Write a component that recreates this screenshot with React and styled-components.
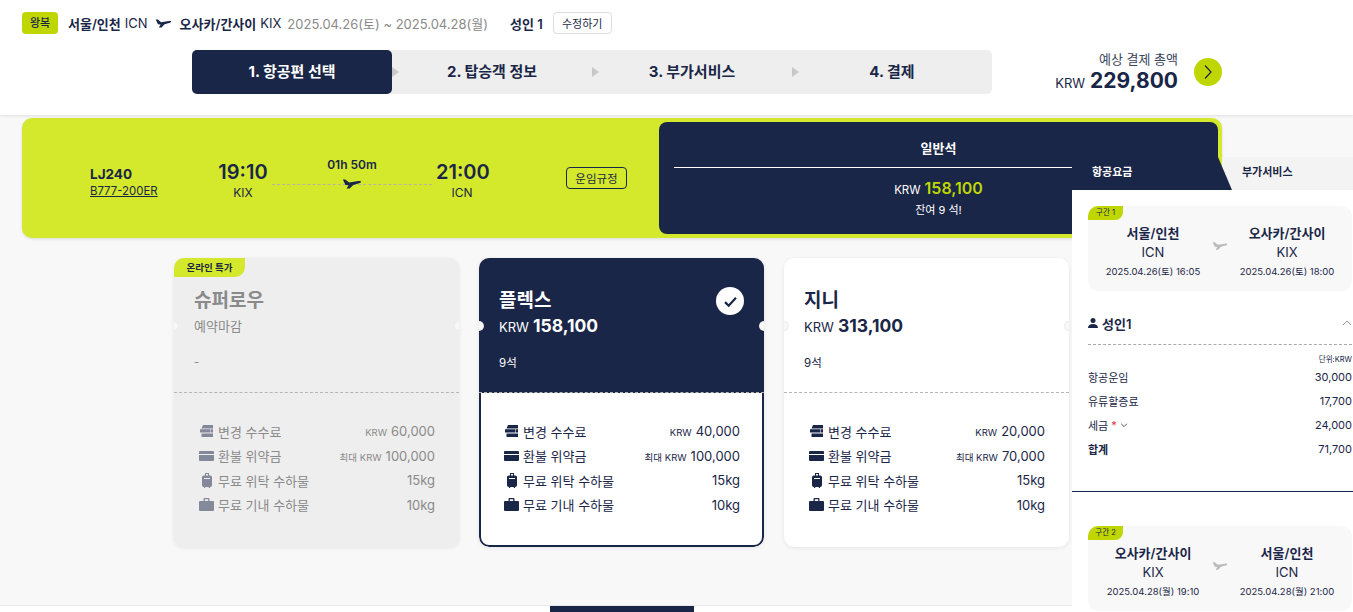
import * as React from 'react';
import styled, { createGlobalStyle } from 'styled-components';

const navy = '#1a2647';
const lime = '#d4e92b';
const darkLime = '#bfd600';

const GlobalStyle = createGlobalStyle`
    html, body { margin: 0; padding: 0; height: 100%; overflow: hidden; }
    body {
        font-family: Inter, "Noto Sans CJK KR", "Noto Sans", sans-serif;
        color: ${navy};
        background: #f8f8f8;
    }
    #root { height: 100%; }
    * { box-sizing: border-box; }
`;

const Page = styled.div`
    position: relative;
    height: 612px;
    display: flex;
    flex-direction: column;
    overflow: hidden;
`;

const Header = styled.header`
    height: 115px;
    flex: none;
    padding: 12px 131px 0 22px;
    background: #fff;
    box-shadow: 0 1px 3px rgba(0, 0, 0, 0.1);
`;

const Summary = styled.div`
    display: flex;
    align-items: center;
    height: 22px;
    font-size: 13px;
    white-space: nowrap;
`;

const TripBadge = styled.span`
    width: 36px;
    height: 22px;
    margin-right: 10px;
    border-radius: 4px;
    background: ${darkLime};
    font-size: 11px;
    font-weight: 500;
    line-height: 22px;
    text-align: center;
`;

const City = styled.b`
    font-weight: 600;
    margin-right: 4px;
`;

const Dates = styled.span`
    margin-left: 6px;
    color: #8a8a8a;
`;

const Pax = styled.b`
    margin-left: 22px;
    font-weight: 600;
`;

const EditButton = styled.button`
    width: 59px;
    height: 22px;
    margin-left: 10px;
    padding: 0;
    border: 1px solid #ddd;
    border-radius: 4px;
    background: #fff;
    color: ${navy};
    font: inherit;
    font-size: 11px;
`;

const RouteArrow = styled.span`
    display: inline-flex;
    margin: 0 8px 0 7px;
`;

const HeaderBottom = styled.div`
    display: flex;
    align-items: center;
    height: 44px;
    margin: 16px 0 0 170px;
`;

const Steps = styled.ol`
    display: flex;
    width: 800px;
    height: 44px;
    margin: 0;
    padding: 0;
    list-style: none;
    border-radius: 5px;
    background: #eee;
`;

const Step = styled.li`
    position: relative;
    flex: 1;
    border-radius: 5px;
    background: ${p => (p.$active ? navy : 'transparent')};
    color: ${p => (p.$active ? '#fff' : navy)};
    font-size: 15px;
    font-weight: 700;
    line-height: 44px;
    text-align: center;

    &:not(:last-child)::after {
        content: '';
        position: absolute;
        left: 100%;
        top: 17px;
        border-style: solid;
        border-width: 5px 0 5px 7px;
        border-color: transparent transparent transparent #c8c8c8;
    }
`;

const Total = styled.div`
    display: flex;
    align-items: center;
    margin-left: auto;
`;

const TotalText = styled.div`
    text-align: right;
`;

const TotalLabel = styled.div`
    font-size: 13px;
    line-height: 18px;
    color: #3a4560;
`;

const TotalAmount = styled.div`
    display: flex;
    align-items: baseline;
    justify-content: flex-end;
    gap: 5px;
    height: 26px;
    font-size: 13px;
    line-height: 26px;
`;

const TotalNumber = styled.b`
    font-size: 21px;
    font-weight: 700;
    line-height: 26px;
`;

const NextButton = styled.button`
    display: flex;
    align-items: center;
    justify-content: center;
    width: 28px;
    height: 28px;
    margin-left: 16px;
    padding: 0;
    border: 0;
    border-radius: 50%;
    background: ${darkLime};
    color: ${navy};
`;

const Main = styled.main`
    flex: 1;
    padding: 3px 0 0 22px;
`;

const FlightCard = styled.section`
    display: flex;
    width: 1200px;
    height: 120px;
    padding: 4px;
    border-radius: 10px;
    background: ${lime};
    box-shadow: 0 1px 3px rgba(0, 0, 0, 0.12);
`;

const FlightInfo = styled.div`
    display: flex;
    align-items: center;
    width: 633px;
    padding-left: 64px;
`;

const FlightNumber = styled.div`
    width: 127px;
    margin-top: 6px;
`;

const FlightCode = styled.div`
    font-size: 13.5px;
    font-weight: 700;
    line-height: 20px;
`;

const Aircraft = styled.div`
    font-size: 11.4px;
    line-height: 15px;
    text-decoration: underline;
`;

const TimeBlock = styled.div`
    width: 52px;
    margin-top: 4px;
    text-align: center;
`;

const Time = styled.div`
    font-size: 20px;
    font-weight: 600;
    line-height: 26px;
`;

const Airport = styled.div`
    font-size: 12px;
    line-height: 16px;
`;

const Duration = styled.div`
    position: relative;
    width: 160px;
    margin: 0 4px 2px 3px;
    padding-bottom: 24px;
    font-size: 12px;
    font-weight: 600;
    line-height: 16px;
    text-align: center;
`;

const DurationLine = styled.div`
    position: absolute;
    left: 0;
    right: 0;
    bottom: 12px;
    border-top: 1px dashed #b6b6a0;
`;

const DurationPlane = styled.span`
    position: absolute;
    left: 70px;
    bottom: 3px;
    display: flex;
`;

const RuleButton = styled.button`
    width: 61px;
    height: 22px;
    margin-left: 78px;
    padding: 0;
    border: 1px solid ${navy};
    border-radius: 4px;
    background: transparent;
    color: ${navy};
    font: inherit;
    font-size: 11.5px;
`;

const FarePanel = styled.div`
    flex: 1;
    padding: 0 15px;
    border-radius: 8px;
    background: ${navy};
    color: #fff;
    text-align: center;
`;

const FareClass = styled.div`
    height: 46px;
    border-bottom: 1px solid #fff;
    font-size: 13px;
    font-weight: 600;
    line-height: 53px;
`;

const FarePrice = styled.div`
    margin-top: 10px;
    font-size: 11.5px;
    line-height: 21px;
`;

const FareNumber = styled.b`
    margin-left: 4px;
    color: ${darkLime};
    font-size: 16px;
    font-weight: 600;
`;

const FareSeats = styled.div`
    font-size: 11px;
    line-height: 18px;
`;

const Cards = styled.div`
    display: flex;
    gap: 20px;
    margin: 20px 0 0 152px;
`;

const Card = styled.article`
    position: relative;
    width: 285px;
    height: 289px;
    border-radius: 10px;
    overflow: hidden;
    background: ${p => (p.$tone === 'closed' ? '#eee' : '#fff')};
    color: ${p => (p.$tone === 'closed' ? '#8a8a8a' : navy)};
    box-shadow: 0 1px 4px rgba(0, 0, 0, 0.08);
`;

const CardTop = styled.div`
    position: relative;
    height: 135px;
    padding: 30px 20px 0;
    background: ${p => (p.$tone === 'selected' ? navy : 'transparent')};
    color: ${p => (p.$tone === 'selected' ? '#fff' : 'inherit')};
    border-bottom: 1px dashed #b5b5b5;

    &::before,
    &::after {
        content: '';
        position: absolute;
        top: 63px;
        width: 10px;
        height: 10px;
        border-radius: 50%;
        background: #f8f8f8;
        box-shadow: inset 0 0 2px rgba(0, 0, 0, 0.12);
    }
    &::before { left: -5px; }
    &::after { right: -5px; }
`;

const CardBottom = styled.div`
    height: 154px;
    padding: ${p => (p.$tone === 'selected' ? '26px 22px 0 18px' : '26px 24px 0 20px')};
    border: ${p => (p.$tone === 'selected' ? `2px solid ${navy}` : '0')};
    border-top: 0;
    border-radius: 0 0 10px 10px;
`;

const OnlineTag = styled.span`
    position: absolute;
    left: 0;
    top: 0;
    width: 71px;
    height: 19px;
    border-radius: 0 0 10px 0;
    background: ${lime};
    color: ${navy};
    font-size: 9.5px;
    font-weight: 600;
    line-height: 19px;
    text-align: center;
`;

const CardTitle = styled.h3`
    margin: 0;
    font-size: 19px;
    font-weight: 700;
    line-height: 25px;
`;

const CardPrice = styled.div`
    font-size: 13px;
    line-height: 26px;
`;

const CardPriceNumber = styled.b`
    margin-left: 4px;
    font-size: 17.5px;
    font-weight: 700;
`;

const ClosedLabel = styled.div`
    font-size: 13px;
    line-height: 26px;
`;

const CardNote = styled.div`
    margin-top: 10px;
    font-size: 11.5px;
    line-height: 26px;
`;

const SelectedMark = styled.span`
    position: absolute;
    right: 20px;
    top: 29px;
    display: flex;
    align-items: center;
    justify-content: center;
    width: 28px;
    height: 28px;
    border-radius: 50%;
    background: #fff;
    color: ${navy};
`;

const BenefitRow = styled.div`
    display: flex;
    align-items: center;
    height: 24.5px;
    font-size: 13px;
`;

const BenefitIcon = styled.span`
    display: flex;
    justify-content: center;
    flex: none;
    width: 15px;
    margin: 0 4px 0 5px;
    color: ${navy};
    opacity: ${p => (p.$closed ? 0.5 : 1)};
`;

const BenefitValue = styled.span`
    margin-left: auto;
    font-size: 13px;
`;

const Currency = styled.small`
    margin-right: 4px;
    font-size: 9.5px;
`;

const SidePanel = styled.aside`
    position: absolute;
    left: 1072px;
    top: 157px;
    width: 281px;
    bottom: 0;
`;

const Tabs = styled.div`
    display: flex;
    height: 33px;
    font-size: 11px;
    font-weight: 600;
    line-height: 31px;
`;

const ActiveTab = styled.div`
    width: 160px;
    padding-left: 20px;
    background: ${navy};
    color: #fff;
    clip-path: polygon(0 0, 146px 0, 100% 100%, 0 100%);
`;

const IdleTab = styled.div`
    flex: 1;
    margin-left: -10px;
    padding-left: 20px;
    background: #f3f3f3;
`;

const PanelBody = styled.div`
    height: 440px;
    padding: 16px 1px 0 16px;
    background: #fff;
`;

const Segment = styled.div`
    position: relative;
    display: flex;
    align-items: flex-start;
    height: 85px;
    padding: 18px 6px 0;
    border-radius: 10px;
    background: #f8f8f8;
    overflow: hidden;
`;

const SegmentTag = styled.span`
    position: absolute;
    left: 0;
    top: 0;
    width: 35px;
    height: 14px;
    border-radius: 0 0 8px 0;
    background: ${darkLime};
    font-size: 7.5px;
    line-height: 14px;
    text-align: center;
`;

const SegmentPoint = styled.div`
    flex: 1;
    text-align: center;
    white-space: nowrap;
`;

const SegmentCity = styled.div`
    font-size: 13px;
    font-weight: 600;
    line-height: 19px;
`;

const SegmentCode = styled.div`
    font-size: 13px;
    line-height: 18px;
`;

const SegmentDate = styled.div`
    margin-top: 4px;
    font-size: 9.5px;
    line-height: 14px;
`;

const SegmentPlane = styled.span`
    display: flex;
    width: 16px;
    margin-top: 14px;
`;

const PaxHead = styled.div`
    display: flex;
    align-items: center;
    gap: 4px;
    height: 43px;
    margin-top: 11px;
    border-bottom: 1px dashed #aaa;
    font-size: 13px;
    font-weight: 600;
`;

const Collapse = styled.span`
    display: flex;
    margin-left: auto;
    color: #999;
`;

const Unit = styled.div`
    margin: 10px 0 0;
    font-size: 7.5px;
    line-height: 10px;
    text-align: right;
`;

const FareRow = styled.div`
    display: flex;
    justify-content: space-between;
    align-items: center;
    height: 24px;
    font-size: 11px;
    font-weight: ${p => (p.$total ? 700 : 400)};
`;

const FareLabel = styled.span`
    display: inline-flex;
    align-items: center;
    gap: 3px;
`;

const Amount = styled.span`
    font-weight: 400;
`;

const Star = styled.span`
    color: #e0344a;
`;

const PanelRule = styled.hr`
    height: 1px;
    margin: 30px -1px 34px -16px;
    border: 0;
    background: ${navy};
`;

const FooterBar = styled.footer`
    flex: none;
    height: 7px;
    padding-left: 550px;
    background: #fff;
    border-top: 1px solid #e8e8e8;
`;

const FooterTab = styled.div`
    width: 144px;
    height: 100%;
    background: ${navy};
`;

const Plane = ({ size = 16, color = navy }) => (
    <svg width={size} height={size} viewBox="0 0 24 24" fill={color} aria-hidden="true">
        <path d="M1 6.500h3l4.500 3.800 11-1.800c2.600-.4 4 .6 3.200 1.500-.6.7-2.400 1.300-4.200 1.800l-5 1.400-4.300 4.300H5.400l2.600-4-3.800-.3z" />
    </svg>
);

const ChangeIcon = () => (
    <svg width="13" height="12" viewBox="0 0 13 12" fill="currentColor" aria-hidden="true">
        <path d="M3 0h10v3.400H1.500zM0 4.200h10.500v3.400H0zM11 4.200h2v3.400h-2zM1.500 8.400H13V12H1.500z" />
    </svg>
);

const CardIcon = () => (
    <svg width="15" height="10" viewBox="0 0 15 10" fill="currentColor" aria-hidden="true">
        <path d="M0 1a1 1 0 0 1 1-1h13a1 1 0 0 1 1 1v2H0zM0 4h15v5a1 1 0 0 1-1 1H1a1 1 0 0 1-1-1z" />
    </svg>
);

const SuitcaseIcon = () => (
    <svg width="10" height="15" viewBox="0 0 10 15" fill="currentColor" aria-hidden="true">
        <path d="M3 0h4v2.400h1.200A1.800 1.800 0 0 1 10 4.200v8A1.800 1.800 0 0 1 8.200 14H8v1H6.800v-1H3.200v1H2v-1h-.2A1.800 1.800 0 0 1 0 12.200v-8a1.800 1.800 0 0 1 1.800-1.800H3zm1 1v1.400h2V1zM2 5v1h6V5z" fillRule="evenodd" />
    </svg>
);

const BagIcon = () => (
    <svg width="15" height="13" viewBox="0 0 15 13" fill="currentColor" aria-hidden="true">
        <path d="M4.500 3V1a1 1 0 0 1 1-1h4a1 1 0 0 1 1 1v2H14a1 1 0 0 1 1 1v8a1 1 0 0 1-1 1H1a1 1 0 0 1-1-1V4a1 1 0 0 1 1-1zm1.300 0h3.400V1.200H5.800z" fillRule="evenodd" />
    </svg>
);

const PersonIcon = () => (
    <svg width="10" height="10" viewBox="0 0 10 10" fill={navy} aria-hidden="true">
        <circle cx="5" cy="2.500" r="2.500" />
        <path d="M0 10c0-2.800 2-4 5-4s5 1.200 5 4z" />
    </svg>
);

const Chevron = ({ size = 10, up }) => (
    <svg width={size} height={size} viewBox="0 0 10 10" fill="none" stroke="currentColor" aria-hidden="true">
        <path d={up ? 'M1 7l4-4 4 4' : 'M1.500 3.500L5 7l3.500-3.500'} />
    </svg>
);

const fares = [
    {
        tone: 'closed',
        title: '슈퍼로우',
        note: '-',
        change: '60,000',
        refund: '100,000',
    },
    {
        tone: 'selected',
        title: '플렉스',
        price: '158,100',
        note: '9석',
        change: '40,000',
        refund: '100,000',
    },
    {
        tone: 'open',
        title: '지니',
        price: '313,100',
        note: '9석',
        change: '20,000',
        refund: '70,000',
    },
];

const FareCard = ({ tone, title, price, note, change, refund }) => {
    const closed = tone === 'closed';
    return (
        <Card $tone={tone}>
            <CardTop $tone={tone}>
                <CardTitle>{title}</CardTitle>
                {closed ? (
                    <ClosedLabel>예약마감</ClosedLabel>
                ) : (
                    <CardPrice>
                        KRW<CardPriceNumber>{price}</CardPriceNumber>
                    </CardPrice>
                )}
                <CardNote>{note}</CardNote>
                {tone === 'selected' && (
                    <SelectedMark>
                        <svg width="17" height="17" viewBox="0 0 14 14" fill="none" stroke={navy} strokeWidth="1.800">
                            <path d="M2.500 7.500l3 3 6-6.500" />
                        </svg>
                    </SelectedMark>
                )}
            </CardTop>
            {closed && <OnlineTag>온라인 특가</OnlineTag>}
            <CardBottom $tone={tone}>
                <BenefitRow>
                    <BenefitIcon $closed={closed}><ChangeIcon /></BenefitIcon>
                    변경 수수료
                    <BenefitValue><Currency>KRW</Currency>{change}</BenefitValue>
                </BenefitRow>
                <BenefitRow>
                    <BenefitIcon $closed={closed}><CardIcon /></BenefitIcon>
                    환불 위약금
                    <BenefitValue><Currency>최대 KRW</Currency>{refund}</BenefitValue>
                </BenefitRow>
                <BenefitRow>
                    <BenefitIcon $closed={closed}><SuitcaseIcon /></BenefitIcon>
                    무료 위탁 수하물
                    <BenefitValue>15kg</BenefitValue>
                </BenefitRow>
                <BenefitRow>
                    <BenefitIcon $closed={closed}><BagIcon /></BenefitIcon>
                    무료 기내 수하물
                    <BenefitValue>10kg</BenefitValue>
                </BenefitRow>
            </CardBottom>
        </Card>
    );
};

const SegmentCard = ({ tag, from, to }) => (
    <Segment>
        <SegmentTag>{tag}</SegmentTag>
        <SegmentPoint>
            <SegmentCity>{from.city}</SegmentCity>
            <SegmentCode>{from.code}</SegmentCode>
            <SegmentDate>{from.date}</SegmentDate>
        </SegmentPoint>
        <SegmentPlane><Plane size={16} color="#bbb" /></SegmentPlane>
        <SegmentPoint>
            <SegmentCity>{to.city}</SegmentCity>
            <SegmentCode>{to.code}</SegmentCode>
            <SegmentDate>{to.date}</SegmentDate>
        </SegmentPoint>
    </Segment>
);

const App = () => (
    <Page>
        <GlobalStyle />
        <Header>
            <Summary>
                <TripBadge>왕복</TripBadge>
                <City>서울/인천</City> ICN
                <RouteArrow><Plane size={17} /></RouteArrow>
                <City>오사카/간사이</City> KIX
                <Dates>2025.04.26(토) ~ 2025.04.28(월)</Dates>
                <Pax>성인 1</Pax>
                <EditButton>수정하기</EditButton>
            </Summary>
            <HeaderBottom>
                <Steps>
                    <Step $active>1. 항공편 선택</Step>
                    <Step>2. 탑승객 정보</Step>
                    <Step>3. 부가서비스</Step>
                    <Step>4. 결제</Step>
                </Steps>
                <Total>
                    <TotalText>
                        <TotalLabel>예상 결제 총액</TotalLabel>
                        <TotalAmount>KRW <TotalNumber>229,800</TotalNumber></TotalAmount>
                    </TotalText>
                    <NextButton aria-label="다음">
                        <svg width="16" height="16" viewBox="0 0 16 16" fill="none" stroke={navy} strokeWidth="1.200">
                            <path d="M5 1.500L11 8l-6 6.500" />
                        </svg>
                    </NextButton>
                </Total>
            </HeaderBottom>
        </Header>
        <Main>
            <FlightCard>
                <FlightInfo>
                    <FlightNumber>
                        <FlightCode>LJ240</FlightCode>
                        <Aircraft>B777-200ER</Aircraft>
                    </FlightNumber>
                    <TimeBlock>
                        <Time>19:10</Time>
                        <Airport>KIX</Airport>
                    </TimeBlock>
                    <Duration>
                        01h 50m
                        <DurationLine />
                        <DurationPlane><Plane size={20} /></DurationPlane>
                    </Duration>
                    <TimeBlock>
                        <Time>21:00</Time>
                        <Airport>ICN</Airport>
                    </TimeBlock>
                    <RuleButton>운임규정</RuleButton>
                </FlightInfo>
                <FarePanel>
                    <FareClass>일반석</FareClass>
                    <FarePrice>KRW<FareNumber>158,100</FareNumber></FarePrice>
                    <FareSeats>잔여 9 석!</FareSeats>
                </FarePanel>
            </FlightCard>
            <Cards>
                {fares.map(fare => <FareCard key={fare.title} {...fare} />)}
            </Cards>
        </Main>
        <FooterBar><FooterTab /></FooterBar>
        <SidePanel>
            <Tabs>
                <ActiveTab>항공요금</ActiveTab>
                <IdleTab>부가서비스</IdleTab>
            </Tabs>
            <PanelBody>
                <SegmentCard
                    tag="구간 1"
                    from={{ city: '서울/인천', code: 'ICN', date: '2025.04.26(토) 16:05' }}
                    to={{ city: '오사카/간사이', code: 'KIX', date: '2025.04.26(토) 18:00' }}
                />
                <PaxHead>
                    <PersonIcon />
                    성인1
                    <Collapse><Chevron up /></Collapse>
                </PaxHead>
                <Unit>단위:KRW</Unit>
                <FareRow><span>항공운임</span><Amount>30,000</Amount></FareRow>
                <FareRow><span>유류할증료</span><Amount>17,700</Amount></FareRow>
                <FareRow>
                    <FareLabel>세금 <Star>*</Star> <Chevron size={8} /></FareLabel>
                    <Amount>24,000</Amount>
                </FareRow>
                <FareRow $total><span>합계</span><Amount>71,700</Amount></FareRow>
                <PanelRule />
                <SegmentCard
                    tag="구간 2"
                    from={{ city: '오사카/간사이', code: 'KIX', date: '2025.04.28(월) 19:10' }}
                    to={{ city: '서울/인천', code: 'ICN', date: '2025.04.28(월) 21:00' }}
                />
            </PanelBody>
        </SidePanel>
    </Page>
);

export default App;
